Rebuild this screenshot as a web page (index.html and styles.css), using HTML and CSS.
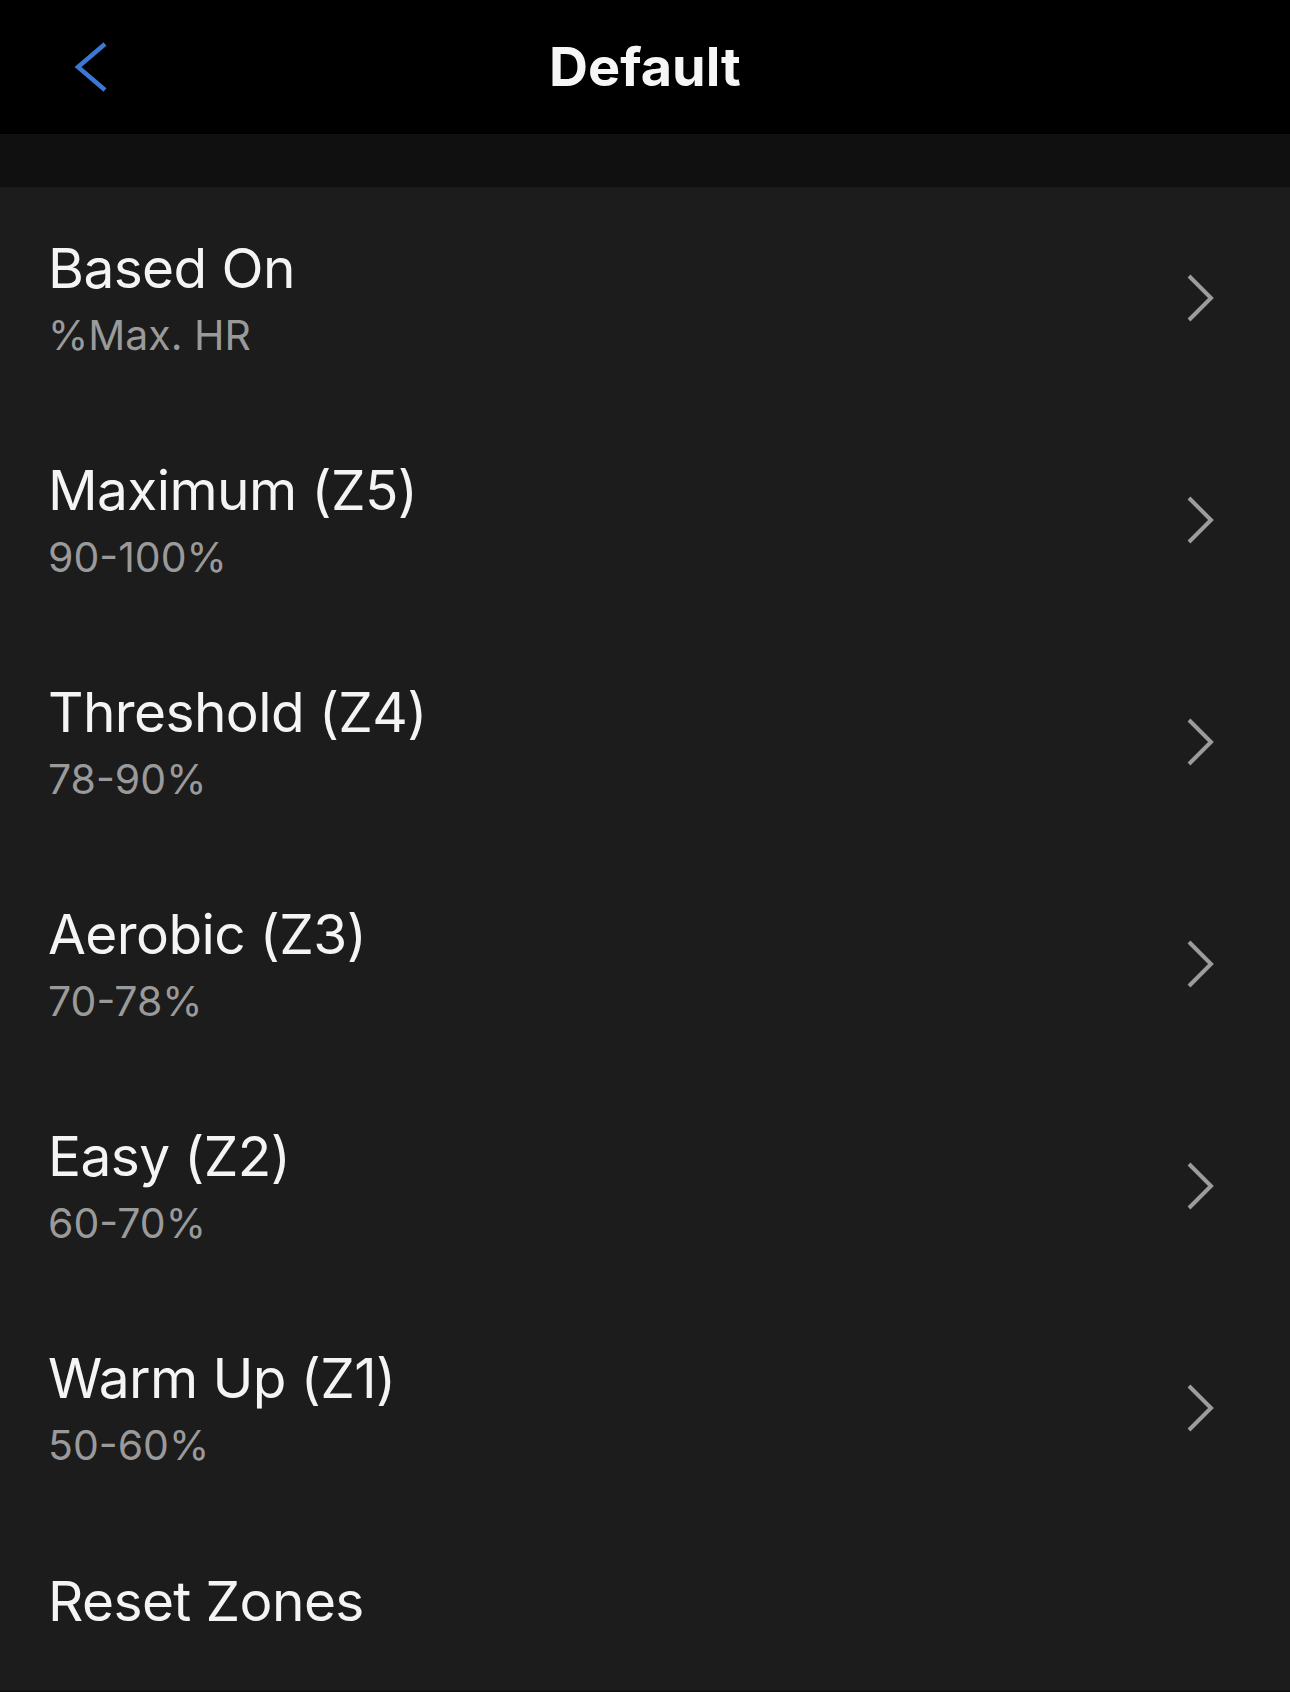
FILE: index.html
```html
<!DOCTYPE html>
<html lang="en">
<head>
<meta charset="utf-8">
<title>Default</title>
<link rel="stylesheet" href="styles.css">
</head>
<body>
<div class="screen">
  <header class="nav">
    <div class="nav-left">
      <svg class="back" width="36" height="54" viewBox="0 0 36 54" aria-hidden="true">
        <polyline points="31,4 4,27 31,50" fill="none" stroke="#3b78d4" stroke-width="4.5" stroke-linecap="butt" stroke-linejoin="miter"/>
      </svg>
    </div>
    <h1 class="nav-title">Default</h1>
    <div class="nav-right"></div>
  </header>
  <div class="band"></div>
  <ul class="list">
    <li class="row">
      <div class="text"><div class="title">Based On</div><div class="sub">%Max. HR</div></div>
      <svg class="chev" width="32" height="50" viewBox="0 0 32 50" aria-hidden="true"><polyline points="5,3 27,25 5,47" fill="none" stroke="#9c9c9c" stroke-width="4"/></svg>
    </li>
    <li class="row">
      <div class="text"><div class="title">Maximum (Z5)</div><div class="sub">90-100%</div></div>
      <svg class="chev" width="32" height="50" viewBox="0 0 32 50" aria-hidden="true"><polyline points="5,3 27,25 5,47" fill="none" stroke="#9c9c9c" stroke-width="4"/></svg>
    </li>
    <li class="row">
      <div class="text"><div class="title">Threshold (Z4)</div><div class="sub">78-90%</div></div>
      <svg class="chev" width="32" height="50" viewBox="0 0 32 50" aria-hidden="true"><polyline points="5,3 27,25 5,47" fill="none" stroke="#9c9c9c" stroke-width="4"/></svg>
    </li>
    <li class="row">
      <div class="text"><div class="title">Aerobic (Z3)</div><div class="sub">70-78%</div></div>
      <svg class="chev" width="32" height="50" viewBox="0 0 32 50" aria-hidden="true"><polyline points="5,3 27,25 5,47" fill="none" stroke="#9c9c9c" stroke-width="4"/></svg>
    </li>
    <li class="row">
      <div class="text"><div class="title">Easy (Z2)</div><div class="sub">60-70%</div></div>
      <svg class="chev" width="32" height="50" viewBox="0 0 32 50" aria-hidden="true"><polyline points="5,3 27,25 5,47" fill="none" stroke="#9c9c9c" stroke-width="4"/></svg>
    </li>
    <li class="row">
      <div class="text"><div class="title">Warm Up (Z1)</div><div class="sub">50-60%</div></div>
      <svg class="chev" width="32" height="50" viewBox="0 0 32 50" aria-hidden="true"><polyline points="5,3 27,25 5,47" fill="none" stroke="#9c9c9c" stroke-width="4"/></svg>
    </li>
    <li class="row row-last">
      <div class="text"><div class="title">Reset Zones</div></div>
    </li>
  </ul>
</div>
</body>
</html>
```

FILE: styles.css
```css
html, body {
  margin: 0;
  padding: 0;
  background: #111111;
}
body {
  font-family: Inter, "Noto Sans", "Liberation Sans", sans-serif;
  color: #f4f4f4;
  -webkit-font-smoothing: antialiased;
}
.screen {
  width: 1290px;
  min-height: 1692px;
  background: #111111;
}
.nav {
  height: 134px;
  background: #000000;
  display: grid;
  grid-template-columns: 1fr auto 1fr;
  align-items: center;
}
.nav-left {
  display: flex;
  align-items: center;
  padding-left: 74px;
}
.back {
  display: block;
}
.nav-title {
  margin: 0;
  font-size: 54px;
  font-weight: 700;
  line-height: 1;
  color: #f6f6f6;
  letter-spacing: 0;
}
.band {
  height: 53px;
  background: #101010;
}
.list {
  list-style: none;
  margin: 0;
  padding: 0;
  background: #1c1c1c;
}
.row {
  height: 222px;
  display: flex;
  align-items: center;
  justify-content: space-between;
  padding: 0 74px 0 48px;
  box-sizing: border-box;
}
.row-last {
  height: 171px;
  padding-bottom: 7px;
}
.title {
  font-size: 55px;
  line-height: 55px;
  font-weight: 400;
  color: #f4f4f4;
  letter-spacing: -0.6px;
}
.sub {
  margin-top: 19px;
  font-size: 41px;
  line-height: 41px;
  color: #9a9a9a;
}
.chev {
  display: block;
  flex: none;
}
```
